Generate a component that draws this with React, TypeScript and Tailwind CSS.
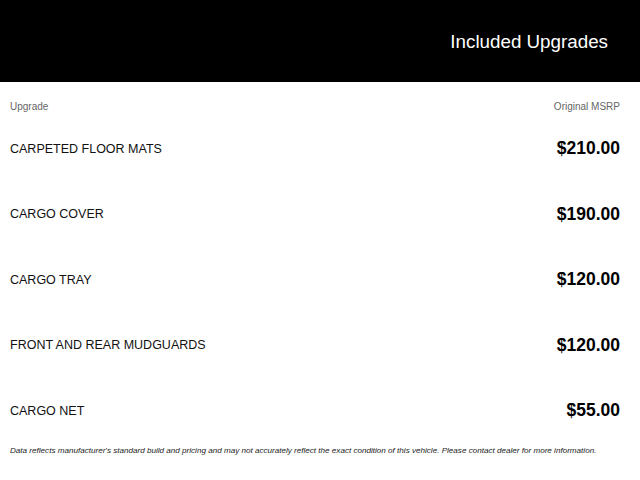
const upgrades = [
  { name: "CARPETED FLOOR MATS", price: "$210.00" },
  { name: "CARGO COVER", price: "$190.00" },
  { name: "CARGO TRAY", price: "$120.00" },
  { name: "FRONT AND REAR MUDGUARDS", price: "$120.00" },
  { name: "CARGO NET", price: "$55.00" },
];

export default function App() {
  return (
    <div className="w-[640px] h-[480px] bg-white [font-family:'Liberation_Sans',Arial,sans-serif] text-black overflow-hidden">
      <header className="h-[82px] bg-black flex items-center justify-end pr-[32px] pt-[2px]">
        <h1 className="text-[18.8px] leading-none text-white">Included Upgrades</h1>
      </header>
      <div className="pl-[10px] pr-[20px]">
        <div className="flex justify-between pt-[19px] pb-[2px] text-[10px] leading-[12px] text-[#666]">
          <span>Upgrade</span>
          <span>Original MSRP</span>
        </div>
        {upgrades.map((u) => (
          <div key={u.name} className="h-[65.5px] flex items-center justify-between">
            <span className="pt-[3px] text-[12.5px] text-[#111]">{u.name}</span>
            <span className="pt-[1px] text-[17.5px] font-bold">{u.price}</span>
          </div>
        ))}
        <p className="mt-[2px] text-[8.1px] leading-[11px] italic text-[#222] whitespace-nowrap">
          Data reflects manufacturer's standard build and pricing and may not accurately reflect the exact condition of this vehicle. Please contact dealer for more information.
        </p>
      </div>
    </div>
  );
}
